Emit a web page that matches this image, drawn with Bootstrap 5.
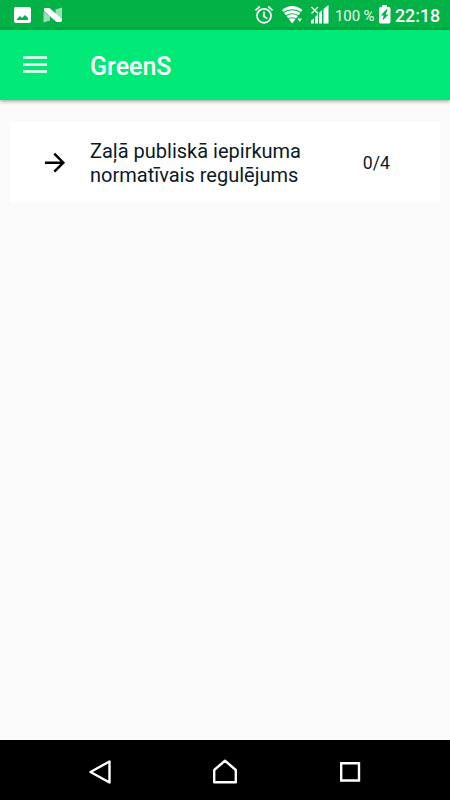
<!DOCTYPE html>
<html lang="lv">
<head>
<meta charset="utf-8">
<meta name="viewport" content="width=device-width, initial-scale=1">
<title>GreenS</title>
<link href="https://cdn.jsdelivr.net/npm/bootstrap@5.3.0/dist/css/bootstrap.min.css" rel="stylesheet">
<style>
body { font-family: Roboto, "Noto Sans", sans-serif; background: #fafafa; color: #0a1a26; }
svg { display: block; flex: none; }
.status-bar { height: 30px; background: #02b246; padding: 0 10px 0 13px; }
.status-pct { font-size: 15px; line-height: 30px; margin-left: 5px; padding-top: 2px; width: 43px; white-space: nowrap; letter-spacing: -.1px; opacity: .93; }
.status-time { font-size: 17.800px; line-height: 30px; margin-left: 4px; padding-top: 2px; width: 45px; }
.app-bar { height: 70px; background: #00e876; padding: 0 20px; box-shadow: 0 1px 4px rgba(0,0,0,.42); }
.app-title { font-size: 25px; line-height: 30px; margin-left: 40px; padding-top: 4px; }
.fw-mid { font-weight: 500; }
.topic { height: 81px; margin: 22px 10px 0; padding: 0 50px 0 30px; }
.topic-name { font-size: 20px; line-height: 24px; margin-left: 20px; }
.topic-count { font-size: 17.700px; line-height: 24px; padding-top: 1px; }
.system-nav { height: 60px; padding: 3px 84px 0 84px; background: #000; }
</style>
<script src="https://cdn.jsdelivr.net/npm/bootstrap@5.3.0/dist/js/bootstrap.bundle.min.js"></script>
</head>
<body>
<div class="vh-100 d-flex flex-column overflow-hidden">
  <div class="status-bar d-flex align-items-center text-white">
    <!-- picture and N notifications -->
    <svg width="52" height="30" fill="#fff"><path fill-rule="evenodd" d="M3 7h13q2 0 2 2v12q0 2-2 2H3q-2 0-2-2V9q0-2 2-2ZM4 20h11v-2l-3-3-3 3-2-2-3 3Z"/><path opacity=".6" d="M30.500 11.500l6.500 5v4l-6.500 2ZM42.500 9.500l6.500-2v13l-6.500-5Z"/><path d="M31 8.500l1-.5h4.500l12.500 11v2l-1 1h-4.500L31 11Z"/></svg>
    <!-- alarm, wifi and mobile signal -->
    <svg class="ms-auto" width="76" height="30" fill="none" stroke="#fff"><circle cx="10" cy="15.800" r="7" stroke-width="1.700"/><path stroke-width="1.700" d="M1.500 10.300l4.300-3.800M18.500 10.300l-4.300-3.800M10 11.500v5l3.300 2"/><path fill="#fff" stroke="none" d="M28 10Q38.200 2 48.500 10L38.200 23.500Z"/><path stroke="#02b246" stroke-width="1.100" d="M28.500 13q9.700-6.500 19.400 0M31 16.200q7.200-5 14.400 0M33.500 19.200q4.700-3 9.400 0"/><path fill="#fff" stroke="none" d="M43.500 18.500H48L45.700 22ZM57 23.500v-3l3-2v5ZM61 23.500V17l3-3v9.500ZM65 23.500V13l3-3v13.500ZM69.500 23.500V9l5-4v18.500Z"/><path stroke-width="1.400" d="M57.500 7l6.500 6.500M64 7l-6.500 6.500"/></svg>
    <div class="status-pct">100 %</div>
    <svg width="13" height="30"><path fill="#fff" d="M4 5h5v2h2q1.500 0 1.500 1.500v13Q12.500 23.500 11 23.500H2.500Q1 23.500 1 21.500v-13Q1 7 2.500 7H4Z"/><path fill="#02b246" d="M8.200 9.500L2.700 15.500h3L4.500 20.500l6-6h-3l2.300-5Z"/></svg>
    <div class="status-time fw-mid">22:18</div>
  </div>
  <header class="app-bar d-flex align-items-center text-white">
    <svg width="30" height="30" stroke="#fff" stroke-width="2.600"><path d="M3 7.500h24M3 14.500h24M3 21.500h24"/></svg>
    <div class="app-title fw-mid">GreenS</div>
  </header>
  <main class="flex-grow-1">
    <div class="topic bg-white d-flex align-items-center">
      <svg width="30" height="30" fill="none" stroke="#000" stroke-width="2.500"><path d="M5 14.700h18M14.300 5.700l9 9-9 9"/></svg>
      <div class="topic-name">Zaļā publiskā iepirkuma<br>normatīvais regulējums</div>
      <div class="topic-count ms-auto">0/4</div>
    </div>
  </main>
  <nav class="system-nav d-flex justify-content-between align-items-center">
    <svg width="32" height="32" fill="none" stroke="#fff" stroke-width="2.400" stroke-linejoin="round"><path d="M25.500 5.500v21L6.500 16Z"/></svg>
    <svg width="32" height="32" fill="none" stroke="#fff" stroke-width="2.400" stroke-linejoin="round"><path d="M16 4.700L5.200 14v12.200h21.600V14Z"/></svg>
    <svg width="32" height="32" fill="none" stroke="#fff" stroke-width="2.400"><path d="M7.200 7.200h17.800v17.300H7.200Z"/></svg>
  </nav>
</div>
</body>
</html>
